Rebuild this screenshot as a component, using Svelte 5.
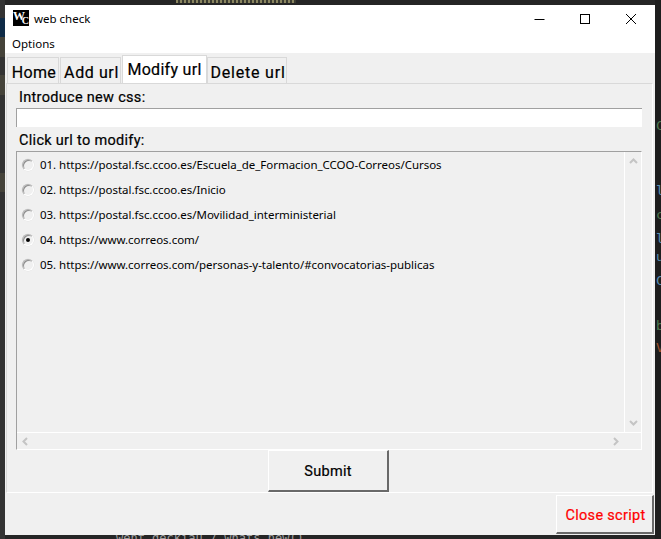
<script>
  const tabs = ['Home', 'Add url', 'Modify url', 'Delete url'];
  const urls = [
    '01. https://postal.fsc.ccoo.es/Escuela_de_Formacion_CCOO-Correos/Cursos',
    '02. https://postal.fsc.ccoo.es/Inicio',
    '03. https://postal.fsc.ccoo.es/Movilidad_interministerial',
    '04. https://www.correos.com/',
    '05. https://www.correos.com/personas-y-talento/#convocatorias-publicas'
  ];
  // bits of the editor behind the window, peeking out on the right
  const gutter = [
    { ch: 'C', y: 118, color: '#4e7a50' },
    { ch: 'l', y: 183, color: '#5a8fb5' },
    { ch: 'c', y: 207, color: '#4e7a50' },
    { ch: 'l', y: 231, color: '#5a8fb5' },
    { ch: 'u', y: 249, color: '#5a8fb5' },
    { ch: 'C', y: 273, color: '#5a8fb5' },
    { ch: 'b', y: 318, color: '#4e7a50' },
    { ch: 'V', y: 340, color: '#a0522d' }
  ];
  let selected = 3;
  let activeTab = 2;
</script>

<div class="desktop">
  <div class="behind-dash"></div>
  {#each gutter as g}
    <span class="gutter" style="top: {g.y}px; color: {g.color}">{g.ch}</span>
  {/each}
  <span class="behind-path">went_deckiau / whats_new()</span>

  <div class="window">
    <header class="titlebar">
      <div class="app-icon"><span class="w">W</span><span class="c">C</span></div>
      <span class="title">web check</span>
      <div class="controls">
        <svg width="46" height="26" viewBox="0 0 46 26"><path d="M18.5 14.5h10" stroke="#000" fill="none"/></svg>
        <svg width="46" height="26" viewBox="0 0 46 26"><rect x="18.5" y="9.5" width="9" height="9" stroke="#000" fill="none"/></svg>
        <svg width="46" height="26" viewBox="0 0 46 26"><path d="M18 9l10 10M28 9L18 19" stroke="#000" fill="none"/></svg>
      </div>
    </header>
    <div class="menubar">Options</div>

    <div class="client">
      <div class="tabs">
        {#each tabs as tab, i}
          <button class="tab" class:active={i === activeTab} on:click={() => (activeTab = i)}>{tab}</button>
        {/each}
      </div>

      <div class="pane">
        <div class="label first">Introduce new css:</div>
        <div class="entry"></div>
        <div class="label second">Click url to modify:</div>

        <div class="listbox">
          <div class="list-main">
            <div class="rows">
              {#each urls as url, i}
                <label class="row">
                  <button class="radio" class:on={selected === i} aria-label="select" on:click={() => (selected = i)}></button>
                  <span>{url}</span>
                </label>
              {/each}
            </div>
            <div class="vscroll">
              <svg width="9" height="6" viewBox="0 0 9 6"><path d="M1 5l3.5-3.5L8 5" stroke="#c4c4c4" stroke-width="2" fill="none"/></svg>
              <svg width="9" height="6" viewBox="0 0 9 6"><path d="M1 1l3.5 3.5L8 1" stroke="#c4c4c4" stroke-width="2" fill="none"/></svg>
            </div>
          </div>
          <div class="hscroll">
            <svg width="6" height="9" viewBox="0 0 6 9"><path d="M5 1L1.5 4.5 5 8" stroke="#c4c4c4" stroke-width="2" fill="none"/></svg>
            <svg width="6" height="9" viewBox="0 0 6 9"><path d="M1 1l3.5 3.5L1 8" stroke="#c4c4c4" stroke-width="2" fill="none"/></svg>
          </div>
        </div>

        <div class="submit-row">
          <button class="raised submit">Submit</button>
        </div>
      </div>

      <div class="footer">
        <button class="raised close">Close script</button>
      </div>
    </div>
  </div>
</div>

<style>
  :global(body) {
    margin: 0;
    background: #252525;
  }

  .desktop {
    width: 661px;
    height: 539px;
    box-sizing: border-box;
    padding: 5px 6px 4px 5px;
    position: relative;
    overflow: hidden;
    background:
      linear-gradient(
        to bottom,
        transparent 18px,
        #0f2b47 18px 37px,
        #45433a 37px 57px,
        transparent 57px 75px,
        #45433a 75px 95px,
        transparent 95px 173px,
        #45433a 173px 192px,
        transparent 192px
      ) left top / 5px 539px no-repeat,
      linear-gradient(#333, #333) left top / 5px 539px no-repeat,
      linear-gradient(#1e1e1e, #1e1e1e) right top / 6px 539px no-repeat,
      #252525;
  }

  .behind-dash {
    position: absolute;
    left: 176px;
    top: 0;
    width: 120px;
    height: 3px;
    background: repeating-linear-gradient(90deg, #8a8560 0 2px, #3a3a30 2px 4px);
  }

  .gutter {
    position: absolute;
    left: 656px;
    font-family: 'DejaVu Sans Mono', monospace;
    font-size: 13px;
    line-height: 15px;
  }

  .behind-path {
    position: absolute;
    left: 116px;
    top: 531px;
    font-family: 'DejaVu Sans Mono', monospace;
    font-size: 12px;
    line-height: 14px;
    color: #a0a0a0;
    white-space: pre;
  }

  .window {
    height: 530px;
    display: flex;
    flex-direction: column;
    background: #fff;
    font-family: 'Noto Sans', 'Open Sans', sans-serif;
    color: #000;
    position: relative;
  }

  .titlebar {
    height: 26px;
    flex: none;
    display: flex;
    align-items: center;
    padding-left: 8px;
  }

  .app-icon {
    width: 16px;
    height: 16px;
    background: #000;
    position: relative;
    overflow: hidden;
    flex: none;
    font-family: 'Liberation Serif', serif;
    font-weight: 700;
    color: #fff;
    line-height: 1;
  }

  .w {
    position: absolute;
    left: 0;
    top: 0;
    font-size: 12px;
  }

  .c {
    position: absolute;
    right: 0;
    bottom: 0;
    font-size: 10px;
  }

  .title {
    margin-left: 5px;
    font-size: 11.5px;
    color: #000;
  }

  .controls {
    margin-left: auto;
    display: flex;
    margin-right: 1px;
  }

  .controls svg {
    display: block;
  }

  .menubar {
    height: 22px;
    flex: none;
    box-sizing: border-box;
    padding: 5px 0 0 7px;
    font-size: 11.5px;
    line-height: 16px;
  }

  .client {
    flex: 1;
    display: flex;
    flex-direction: column;
    background: #f0f0f0;
    min-height: 0;
  }

  .tabs {
    height: 30px;
    flex: none;
    display: flex;
    align-items: flex-end;
    padding-left: 2px;
    gap: 1px;
  }

  .tab {
    height: 26px;
    padding: 3px 0 0 2px;
    border: 1px solid #d9d9d9;
    border-bottom: 0;
    background: #f0f0f0;
    font-family: 'Roboto', 'Noto Sans', sans-serif;
    font-size: 16px;
    -webkit-text-stroke: 0.2px #000;
    letter-spacing: 0.3px;
    color: #000;
    box-sizing: border-box;
    width: 52px;
  }

  .tab:nth-child(2) {
    width: 61px;
    letter-spacing: 0.6px;
  }

  .tab.active {
    width: 85px;
    height: 28px;
    background: #fff;
    margin-right: -1px;
    padding: 0 0 1px;
    position: relative;
  }

  .tab:nth-child(4) {
    width: 80px;
    letter-spacing: 0.8px;
  }

  .pane {
    height: 410px;
    flex: none;
    box-sizing: border-box;
    margin: 0 2px 0 1px;
    border: 1px solid #d9d9d9;
    border-right-color: #fff;
    border-bottom-color: #fff;
    padding: 0 10px 0 9px;
    display: flex;
    flex-direction: column;
  }

  .label {
    font-family: 'Roboto', 'Noto Sans', sans-serif;
    font-size: 14.5px;
    -webkit-text-stroke: 0.2px #000;
    letter-spacing: 0.3px;
    line-height: 17px;
    padding-left: 3px;
  }

  .label.first {
    margin-top: 5px;
  }

  .label.second {
    margin-top: 5px;
    margin-bottom: 2px;
  }

  .entry {
    height: 19px;
    flex: none;
    margin-top: 2px;
    box-sizing: border-box;
    background: #fff;
    border-top: 1px solid #a0a0a0;
    border-left: 1px solid #a0a0a0;
  }

  .listbox {
    height: 299px;
    flex: none;
    box-sizing: border-box;
    border-top: 1px solid #a0a0a0;
    border-left: 1px solid #a0a0a0;
    border-right: 1px solid #fff;
    border-bottom: 1px solid #fff;
    display: flex;
    flex-direction: column;
  }

  .list-main {
    flex: 1;
    display: flex;
    min-height: 0;
    border-bottom: 1px solid #fff;
  }

  .rows {
    flex: 1;
  }

  .row {
    height: 25px;
    display: flex;
    align-items: center;
    padding-left: 5px;
    font-size: 11.5px;
    letter-spacing: -0.03px;
    color: #000;
  }

  .radio {
    width: 12px;
    height: 12px;
    padding: 0;
    border-radius: 50%;
    background: #f0f0f0;
    border: 1px solid #b4b4b4;
    border-right-color: #fff;
    border-bottom-color: #fff;
    box-shadow: inset 1px 1px 0 #8e8e8e, 0 0 0 0.5px #e4e4e4;
    box-sizing: border-box;
    margin-right: 6px;
    flex: none;
    position: relative;
  }

  .radio.on::after {
    content: '';
    position: absolute;
    left: 3px;
    top: 3px;
    width: 4px;
    height: 4px;
    border-radius: 50%;
    background: #000;
  }

  .vscroll {
    width: 16px;
    flex: none;
    border-left: 1px solid #fff;
    display: flex;
    flex-direction: column;
    justify-content: space-between;
    align-items: center;
    padding: 6px 0;
  }

  .hscroll {
    height: 16px;
    flex: none;
    display: flex;
    justify-content: space-between;
    align-items: center;
    padding: 0 22px 0 5px;
  }

  .submit-row {
    display: flex;
    justify-content: center;
  }

  .raised {
    background: #f0f0f0;
    border: 1px solid #fff;
    border-right: 2px solid #696969;
    border-bottom: 2px solid #696969;
    box-sizing: border-box;
    padding: 2px 0 0;
    font-family: 'Roboto', 'Noto Sans', sans-serif;
    font-size: 14.5px;
    letter-spacing: 0.3px;
  }

  .submit {
    width: 121px;
    height: 42px;
    color: #000;
    margin-left: -1px;
    -webkit-text-stroke: 0.2px #000;
  }

  .footer {
    display: flex;
    justify-content: flex-end;
    padding-top: 2px;
    padding-right: 1px;
  }

  .close {
    width: 98px;
    height: 39px;
    color: #f00;
    padding-left: 2px;
    -webkit-text-stroke: 0.2px #f00;
  }
</style>
